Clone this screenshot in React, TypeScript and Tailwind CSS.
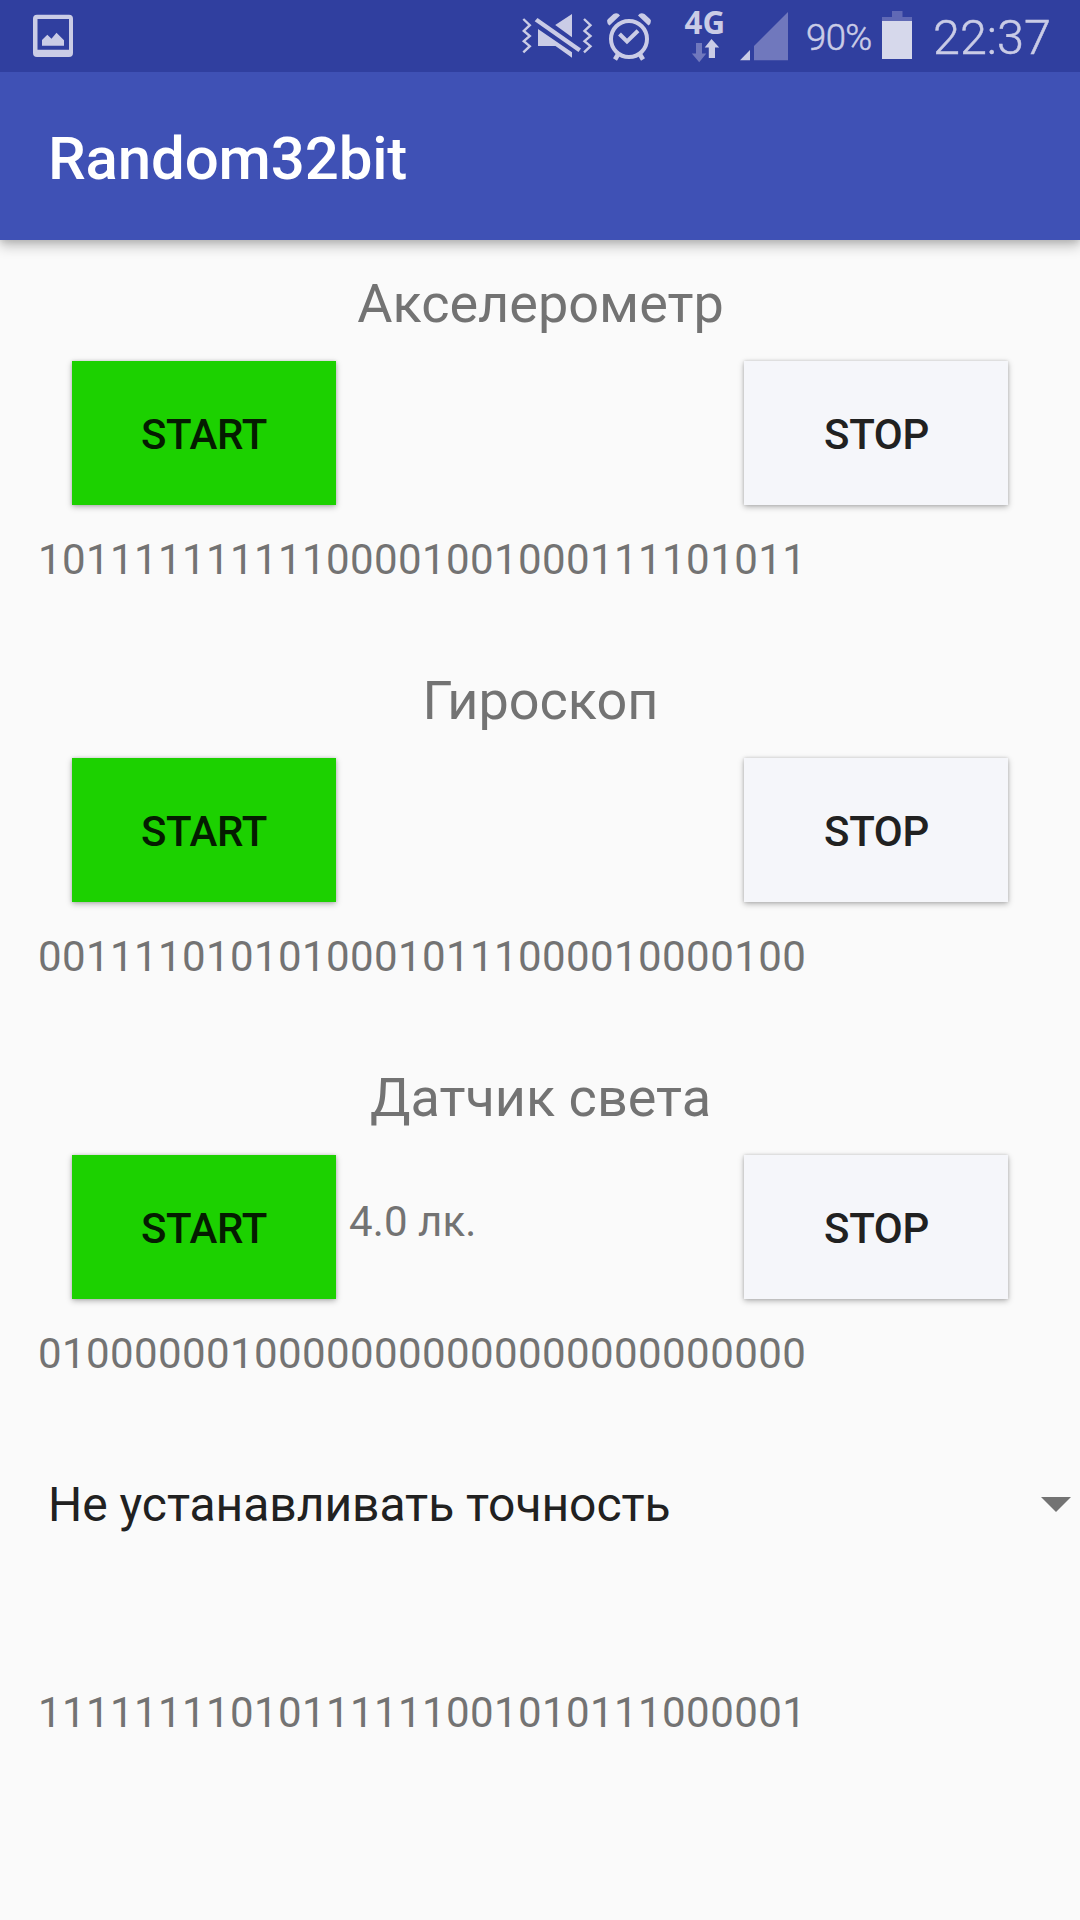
function StatusBar() {
  return (
    <div className="relative z-10 flex h-[72px] items-start bg-[#303f9f] text-[#cacce6]">
      <svg className="ml-[30px] shrink-0" width="46" height="72" viewBox="30 0 46 72">
        <path
          fill="#cacce6"
          fillRule="evenodd"
          d="M37 14.7H69Q73 14.7 73 18.7V53Q73 57 69 57H37Q33 57 33 53V18.7Q33 14.7 37 14.7ZM37.5 19V49.7H69V19Z"
        />
        <path fill="#cacce6" d="M42 45.7V40L47.3 34.7L51.5 38.7L56.5 32.8L64 40.2V45.7Z" />
      </svg>
      <svg className="ml-[440px] shrink-0" width="276" height="72" viewBox="516 0 276 72">
        <g fill="none" stroke="#cacce6" strokeWidth="2.4">
          <path d="M523.3 19L529.8 25.2L523.8 31L529.8 36L523.8 41.2L529.8 46.2L523.3 52.3" />
          <path d="M584 19L590.5 25.2L584.5 31L590.5 36L584.5 41.2L590.5 46.2L584 52.3" />
        </g>
        <g fill="#cacce6">
          <path d="M572 14V37.2L555.2 25Z" />
          <path d="M538 29L572 52.2V57.7L555.5 46H538Z" />
          <path d="M537.5 18L581 48.5L578.5 52L534.7 21.3Z" />
        </g>
        <g stroke="#cacce6" fill="none">
          <circle cx="629" cy="39" r="18" strokeWidth="4" />
          <path d="M619.5 34L627 41.5L638 30.8" strokeWidth="4" />
          <path d="M618 54.5L615 59.5M640 54.5L643 59.5" strokeWidth="4.6" />
        </g>
        <g fill="#cacce6">
          <path d="M607.3 22.2Q606.5 20.5 608 19L613.5 14Q617.5 11.8 620 15.5L609.5 25.5Q607.6 25 607.3 22.2Z" />
          <path d="M650.7 22.2Q651.5 20.5 650 19L644.5 14Q640.5 11.8 638 15.5L648.5 25.5Q650.4 25 650.7 22.2Z" />
          <text
            x="684.6"
            y="34"
            fontSize="32"
            fontWeight="700"
            fontFamily="'Open Sans', sans-serif"
            textLength="40.5"
            lengthAdjust="spacingAndGlyphs"
          >
            4G
          </text>
          <path d="M711.5 39L719.2 47.5H715V58H708.8V47.5H704.7Z" />
          <path d="M740 60.2H750V50Z" />
        </g>
        <path fill="#7078bd" d="M696 43H702V53.5H706.3L699.2 62.2L691.8 53.5H696Z" />
        <path fill="#7078bd" d="M754 46L788 12V60.2H754Z" />
      </svg>
      <span className="ml-[14px] mt-[14px] w-[68px] shrink-0 whitespace-nowrap text-[36.5px] font-light leading-[48px] tracking-[-0.6px] [-webkit-text-stroke:0.5px_#cacce6]">
        90%
      </span>
      <svg className="ml-[6px] shrink-0" width="34" height="72" viewBox="880 0 34 72">
        <path fill="#6069b5" d="M892 11H902.5V17H912V21H882V17H892Z" />
        <path fill="#d6d8eb" d="M882 21H912V59H882Z" />
      </svg>
      <span className="ml-[19px] mt-[9px] whitespace-nowrap text-[48.5px] font-light leading-[58px] [-webkit-text-stroke:0.5px_#cacce6]">
        22:37
      </span>
    </div>
  );
}

function Bits({ value }: { value: string }) {
  return (
    <p className="pl-[38px] text-[42px] leading-[50px] tracking-[0.4px] text-[#737373]">{value}</p>
  );
}

const buttonClass =
  "h-[144px] w-[264px] pt-[3px] text-[42px] font-medium leading-[50px] tracking-[-0.3px] shadow-[0_2px_6px_rgba(0,0,0,0.28),0_0_3px_rgba(0,0,0,0.14)]";

function Sensor({ title, bits, reading }: { title: string; bits: string; reading?: string }) {
  return (
    <section className="h-[397px]">
      <h2 className="pl-[1px] text-center text-[54px] leading-[64px] text-[#737373]">{title}</h2>
      <div className="mt-[25px] flex px-[72px]">
        <button className={buttonClass + " bg-[#1cd100] text-[#041c00]"}>START</button>
        {reading && (
          <span className="ml-[13px] mt-[42px] text-[42px] leading-[50px] tracking-[0.1px] text-[#737373]">
            {reading}
          </span>
        )}
        <button className={buttonClass + " ml-auto bg-[#f5f6fa] pl-[1px] text-[#212121]"}>STOP</button>
      </div>
      <div className="mt-[30px]">
        <Bits value={bits} />
      </div>
    </section>
  );
}

export default function App() {
  return (
    <div className="h-[1920px] w-[1080px] overflow-hidden bg-[#fafafa] font-['Roboto',sans-serif]">
      <StatusBar />
      <header className="flex h-[168px] items-center bg-[#3f51b5] pl-[48px] shadow-[0_6px_12px_rgba(0,0,0,0.24),0_2px_6px_rgba(0,0,0,0.1)]">
        <h1 className="pt-[5px] text-[60px] font-medium leading-[70px] tracking-[-0.15px] text-white">
          Random32bit
        </h1>
      </header>
      <main className="pt-[32px]">
        <Sensor title="Акселерометр" bits="10111111111100001001000111101011" />
        <Sensor title="Гироскоп" bits="00111101010100010111000010000100" />
        <Sensor title="Датчик света" bits="01000000100000000000000000000000" reading="4.0 лк." />
        <div className="mt-[13px] flex h-[56px] items-center justify-between pl-[48px] pr-[9px]">
          <span className="pt-[2px] text-[48px] leading-[56px] tracking-[-0.05px] text-[#212121]">
            Не устанавливать точность
          </span>
          <svg width="30" height="15" viewBox="0 0 30 15">
            <path fill="#737373" d="M0 0H30L15 15Z" />
          </svg>
        </div>
        <div className="mt-[156px]">
          <Bits value="11111111010111111001010111000001" />
        </div>
      </main>
    </div>
  );
}
